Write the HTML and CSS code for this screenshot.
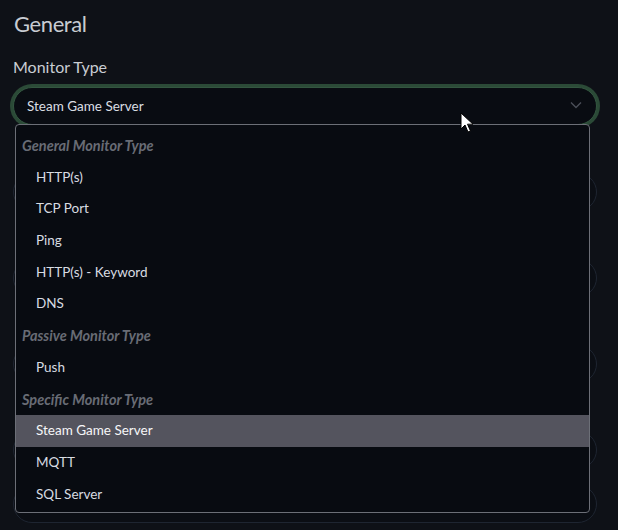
FILE: index.html
```html
<!DOCTYPE html>
<html lang="en">
<head>
<meta charset="utf-8">
<title>General</title>
<link rel="stylesheet" href="styles.css">
</head>
<body>
<main class="page">
  <h2 class="title">General</h2>

  <div class="field">
    <label class="label">Monitor Type</label>
    <div class="select-wrap">
      <div class="select">
        <span class="select-value">Steam Game Server</span>
        <svg class="chevron" width="12" height="8" viewBox="0 0 12 8"><path d="M1 1.5 L6 6.5 L11 1.5" fill="none" stroke="#4b5059" stroke-width="1.3"/></svg>
      </div>
      <ul class="menu">
        <li class="group">General Monitor Type</li>
        <li class="option">HTTP(s)</li>
        <li class="option">TCP Port</li>
        <li class="option">Ping</li>
        <li class="option">HTTP(s) - Keyword</li>
        <li class="option">DNS</li>
        <li class="group">Passive Monitor Type</li>
        <li class="option">Push</li>
        <li class="group">Specific Monitor Type</li>
        <li class="option selected">Steam Game Server</li>
        <li class="option">MQTT</li>
        <li class="option">SQL Server</li>
      </ul>
      <svg class="cursor" width="14" height="22" viewBox="0 0 14 22"><path d="M1 1 L1 17 L5 13 L8 20 L10.5 19 L7.5 12.2 L13 12.2 Z" fill="#ffffff" stroke="#000000" stroke-width="1" stroke-linejoin="round"/></svg>
    </div>
  </div>

  <div class="field">
    <div class="label-space"></div>
    <div class="input"></div>
  </div>
  <div class="field">
    <div class="label-space"></div>
    <div class="input"></div>
  </div>
  <div class="field">
    <div class="label-space"></div>
    <div class="input"></div>
  </div>
  <div class="field">
    <div class="label-space"></div>
    <div class="input"></div>
  </div>
  <div class="field">
    <div class="input input-check"><span class="checkbox"></span></div>
  </div>
</main>
</body>
</html>
```

FILE: styles.css
```css
html, body {
  margin: 0;
  padding: 0;
  background: #0e1117;
  height: 100%;
  overflow: hidden;
}

.page {
  padding: 9px 21px 0 13px;
  font-family: "Lato", "Liberation Sans", sans-serif;
  color: #d3d6db;
}

.title {
  margin: 0 0 17px 1px;
  font-size: 22px;
  letter-spacing: -0.4px;
  font-weight: 400;
  line-height: 29px;
  color: #c8ccd2;
}

.field {
  margin-bottom: 16px;
}

.label {
  display: block;
  font-size: 16px;
  line-height: 24px;
  margin-bottom: 8px;
  color: #c9cdd3;
}

.label-space {
  height: 24px;
  margin-bottom: 8px;
}

.select-wrap {
  position: relative;
}

.select {
  box-sizing: border-box;
  height: 38px;
  border-radius: 19px;
  background: #090c12;
  border: 1px solid #335640;
  box-shadow: 0 0 0 3px #2b4a37;
  display: flex;
  align-items: center;
  justify-content: space-between;
  padding: 0 14px 0 13px;
  font-size: 13.5px;
  color: #dadee4;
}

.chevron {
  display: block;
  margin-top: -2px;
}

.menu {
  position: absolute;
  top: 37px;
  left: 2px;
  right: 7px;
  margin: 0;
  padding: 5px 0 2px 0;
  list-style: none;
  background: #080b11;
  border: 1px solid #6c6f77;
  border-radius: 4px;
  z-index: 2;
}

.menu li {
  height: 31.7px;
  line-height: 31.7px;
  white-space: nowrap;
}

.group {
  padding-left: 6px;
  font-size: 14.5px;
  font-weight: 700;
  font-style: italic;
  color: #686c75;
}

.option {
  padding-left: 20px;
  font-size: 13.5px;
  color: #d8dce2;
}

.option.selected {
  background: #54545e;
  color: #f6f6f8;
}

.cursor {
  position: absolute;
  top: 25px;
  left: 447px;
  z-index: 3;
}

.input {
  box-sizing: border-box;
  height: 38px;
  border-radius: 19px;
  background: #0b0e14;
  border: 1px solid #1e2531;
}

.input-check {
  display: flex;
  justify-content: flex-end;
  padding: 7px 12px 0 0;
}

.checkbox {
  display: block;
  width: 18px;
  height: 18px;
  background: #e9e9ee;
  border-radius: 2px;
}
```
